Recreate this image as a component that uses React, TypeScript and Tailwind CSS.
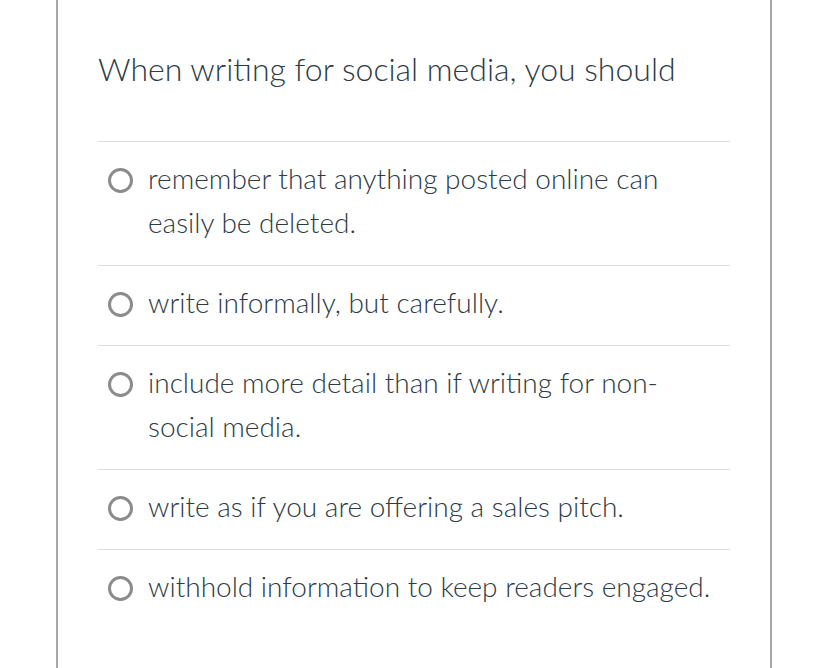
const QUESTION = 'When writing for social media, you should';

const OPTIONS = [
  'remember that anything posted online can easily be deleted.',
  'write informally, but carefully.',
  'include more detail than if writing for non-social media.',
  'write as if you are offering a sales pitch.',
  'withhold information to keep readers engaged.',
];

function Radio() {
  return (
    <span className="mt-[12px] block h-[25px] w-[25px] shrink-0 rounded-full border-[3px] border-[#8b8b8b] bg-white" />
  );
}

export default function App() {
  return (
    <div className="h-[668px] w-full overflow-hidden bg-white font-['Lato','Liberation_Sans',sans-serif] text-[#2d3b45]">
      <div className="ml-[56px] h-full w-[716px] border-x-2 border-[#a8a8a8] px-[40px]">
        <div className="border-b border-[#dddddd] pb-[48px] pt-[45px]">
          <p className="text-[32px] font-light leading-[48px]">{QUESTION}</p>
        </div>
        <ul>
          {OPTIONS.map((text, i) => (
            <li
              key={i}
              className={`flex items-start gap-[15px] pb-[21px] pl-[10px] pr-[12px] pt-[14px] ${
                i < OPTIONS.length - 1 ? 'border-b border-[#dddddd]' : ''
              }`}
            >
              <Radio />
              <span className="text-[28px] font-light leading-[44px]">{text}</span>
            </li>
          ))}
        </ul>
      </div>
    </div>
  );
}
